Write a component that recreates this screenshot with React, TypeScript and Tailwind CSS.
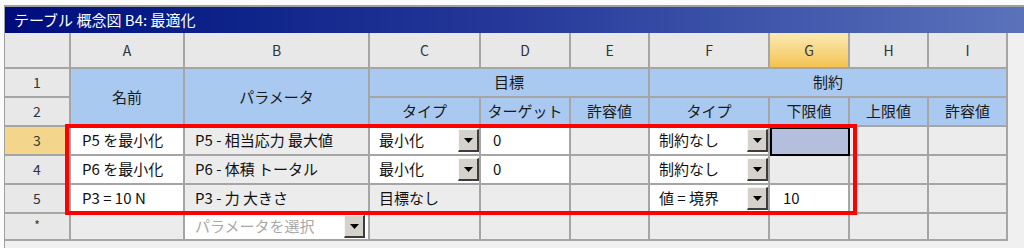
import React from 'react';

// グリッド線・セルの色
const line = 'border-r-2 border-b-2 border-[#a5a5a5]';
const base = `flex items-center overflow-hidden whitespace-nowrap ${line}`;
const head = `${base} justify-center bg-[#e8e8e8] text-[#333]`;
const blue = `${base} justify-center bg-[#a9c9f0] text-[#1a1a1a]`;
const white = `${base} bg-white text-[#111]`;
const grey = `${base} bg-[#ececec] text-[#111]`;

function DropBtn() {
  return (
    <span className="ml-auto flex h-[23px] w-[21px] shrink-0 items-center justify-center border-t border-l border-t-[#f6f6f6] border-l-[#f6f6f6] border-r-2 border-b-2 border-r-[#3c3c3c] border-b-[#3c3c3c] bg-[#d5d2cc]">
      <svg width="9" height="5" viewBox="0 0 9 5">
        <path d="M0 0h9L4.5 5z" fill="#000" />
      </svg>
    </span>
  );
}

export default function App() {
  return (
    <div
      className="relative h-[248px] w-[1024px] overflow-hidden bg-[#fbfbfb] pt-[5px] pl-[4px]"
      style={{ fontFamily: '"Noto Sans CJK JP", "Noto Sans", sans-serif' }}
    >
      <div className="h-full border-t-2 border-l border-[#a0a0a0] bg-[#f0f0f0]">
        {/* タイトルバー */}
        <div className="flex h-[26px] items-center bg-gradient-to-r from-[#000a7c] via-[#26399a] to-[#5b72bb] pl-[9px] text-[15px] text-white">
          テーブル 概念図 B4: 最適化
        </div>

        {/* 表 */}
        <div className="grid w-[1003px] grid-cols-[66px_114px_185px_111px_90px_79px_120px_80px_79px_79px] grid-rows-[36px_29px_29px_29px_29px_29px_27px] text-[15px]">
          <div className={head} />
          {['A', 'B', 'C', 'D', 'E', 'F'].map((c) => (
            <div key={c} className={`${head} text-[14px]`}>{c}</div>
          ))}
          <div className={`${base} justify-center bg-gradient-to-b from-[#fbeab4] to-[#f4c34c] text-[14px] text-[#333]`}>G</div>
          {['H', 'I'].map((c) => (
            <div key={c} className={`${head} text-[14px]`}>{c}</div>
          ))}

          {/* 行 1 */}
          <div className={`${head} text-[14px]`}>1</div>
          <div className={`${blue} row-span-2`}>名前</div>
          <div className={`${blue} row-span-2`}>パラメータ</div>
          <div className={`${blue} col-span-3`}>目標</div>
          <div className={`${blue} col-span-4`}>制約</div>

          {/* 行 2 */}
          <div className={`${head} text-[14px]`}>2</div>
          <div className={blue}>タイプ</div>
          <div className={blue}>ターゲット</div>
          <div className={blue}>許容値</div>
          <div className={blue}>タイプ</div>
          <div className={blue}>下限値</div>
          <div className={blue}>上限値</div>
          <div className={blue}>許容値</div>

          {/* 行 3 */}
          <div className={`${base} justify-center bg-[#f4d58c] text-[14px] text-[#333]`}>3</div>
          <div className={`${white} pl-[11px]`}>P5 を最小化</div>
          <div className={`${grey} pl-[10px]`}>P5 - 相当応力 最大値</div>
          <div className={`${white} pl-[9px]`}>最小化<DropBtn /></div>
          <div className={`${white} pl-[12px]`}>0</div>
          <div className={grey} />
          <div className={`${white} pl-[9px]`}>制約なし<DropBtn /></div>
          <div className={`${line} border-2 border-black bg-[#b4bfdd]`} />
          <div className={grey} />
          <div className={grey} />

          {/* 行 4 */}
          <div className={`${head} text-[14px]`}>4</div>
          <div className={`${white} pl-[11px]`}>P6 を最小化</div>
          <div className={`${grey} pl-[10px]`}>P6 - 体積 トータル</div>
          <div className={`${white} pl-[9px]`}>最小化<DropBtn /></div>
          <div className={`${white} pl-[12px]`}>0</div>
          <div className={grey} />
          <div className={`${white} pl-[9px]`}>制約なし<DropBtn /></div>
          <div className={grey} />
          <div className={grey} />
          <div className={grey} />

          {/* 行 5 */}
          <div className={`${head} text-[14px]`}>5</div>
          <div className={`${white} pl-[11px]`}>P3 = 10 N</div>
          <div className={`${grey} pl-[10px]`}>P3 - 力 大きさ</div>
          <div className={`${grey} pl-[9px]`}>目標なし</div>
          <div className={grey} />
          <div className={grey} />
          <div className={`${white} pl-[9px]`}>値 = 境界<DropBtn /></div>
          <div className={`${white} pl-[13px]`}>10</div>
          <div className={grey} />
          <div className={grey} />

          {/* 行 * */}
          <div className={`${head} items-start pt-[2px] text-[12px]`}>*</div>
          <div className={grey} />
          <div className={`${white} pl-[10px] pr-[3px] text-[#a8a8a8]`}>パラメータを選択<DropBtn /></div>
          <div className={grey} />
          <div className={grey} />
          <div className={grey} />
          <div className={grey} />
          <div className={grey} />
          <div className={grey} />
          <div className={grey} />
        </div>
      </div>

      {/* 赤枠 */}
      <div className="pointer-events-none absolute top-[124px] left-[65px] h-[91px] w-[792px] border-4 border-[#ff0000]" />
    </div>
  );
}
